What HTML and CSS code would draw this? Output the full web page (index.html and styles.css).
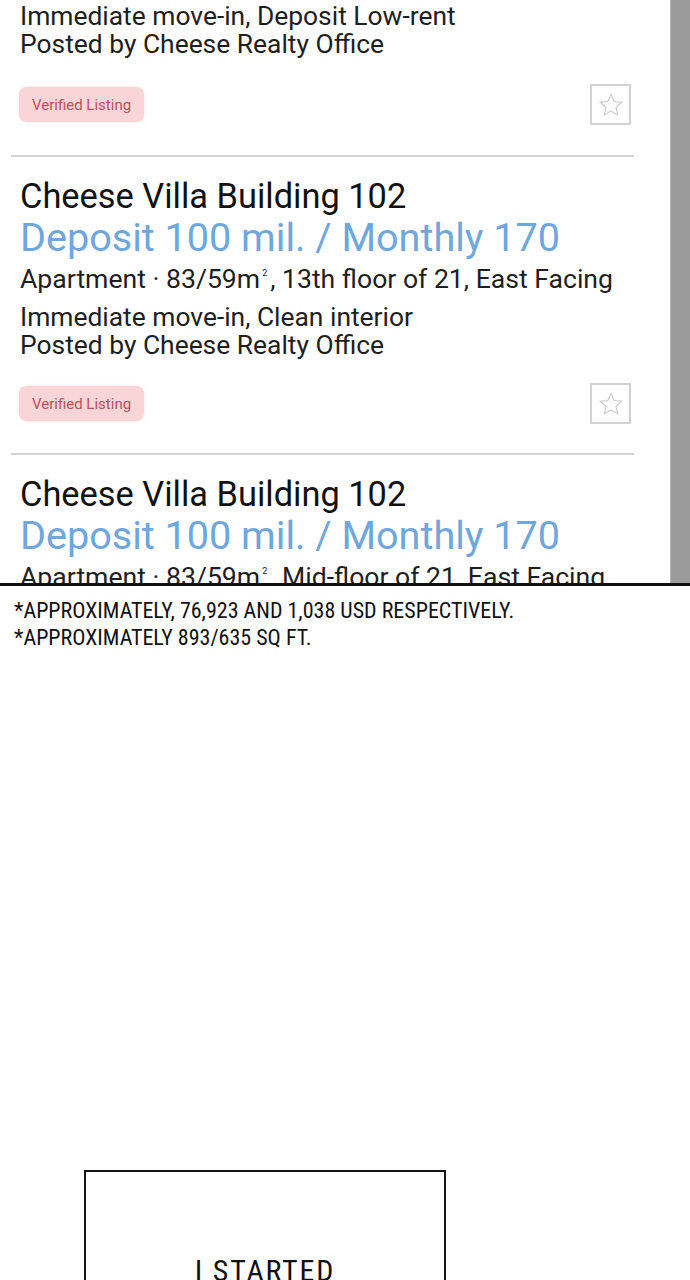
FILE: index.html
```html
<!DOCTYPE html>
<html lang="en">
<head>
<meta charset="utf-8">
<title>Listings</title>
<link rel="stylesheet" href="styles.css">
</head>
<body>
<section class="panel">
  <div class="list">
    <article class="item item-first">
      <div class="desc">
        <div>Immediate move-in, Deposit Low-rent</div>
        <div>Posted by Cheese Realty Office</div>
      </div>
      <div class="meta">
        <span class="badge">Verified Listing</span>
        <span class="fav"><svg viewBox="0 0 24 24" width="26" height="26"><path d="M12 2.2l2.9 6.6 7.1.6-5.4 4.7 1.6 7-6.2-3.7-6.2 3.7 1.6-7L2 9.4l7.1-.6z" fill="none" stroke="#c9c9c9" stroke-width="1" stroke-linejoin="miter"/></svg></span>
      </div>
    </article>
    <hr class="sep">
    <article class="item">
      <h2 class="title">Cheese Villa Building 102</h2>
      <div class="price">Deposit 100 mil. / Monthly 170</div>
      <div class="specs">Apartment · 83/59m<sup>2</sup>, 13th floor of 21, East Facing</div>
      <div class="desc">
        <div>Immediate move-in, Clean interior</div>
        <div>Posted by Cheese Realty Office</div>
      </div>
      <div class="meta">
        <span class="badge">Verified Listing</span>
        <span class="fav"><svg viewBox="0 0 24 24" width="26" height="26"><path d="M12 2.2l2.9 6.6 7.1.6-5.4 4.7 1.6 7-6.2-3.7-6.2 3.7 1.6-7L2 9.4l7.1-.6z" fill="none" stroke="#c9c9c9" stroke-width="1" stroke-linejoin="miter"/></svg></span>
      </div>
    </article>
    <hr class="sep">
    <article class="item">
      <h2 class="title">Cheese Villa Building 102</h2>
      <div class="price">Deposit 100 mil. / Monthly 170</div>
      <div class="specs">Apartment · 83/59m<sup>2</sup>, Mid-floor of 21, East Facing</div>
    </article>
  </div>
  <div class="scrollbar"></div>
</section>
<section class="notes">
  <p>*Approximately, 76,923 and 1,038 USD respectively.</p>
  <p>*Approximately 893/635 sq ft.</p>
</section>
<section class="caption-box">
  <p>I started</p>
</section>
</body>
</html>
```
FILE: styles.css
```css
html, body {
  margin: 0;
  padding: 0;
  background: #fff;
}
body {
  width: 690px;
  font-family: Roboto, "Noto Sans", sans-serif;
  color: #1a1a1a;
  overflow: hidden;
}
.panel {
  display: flex;
  height: 583px;
  overflow: hidden;
  border-bottom: 3px solid #111;
}
.list {
  flex: 1;
  min-width: 0;
}
.scrollbar {
  width: 19px;
  background: #9b9b9b;
  border-left: 1px solid #b5b5b5;
}
.item {
  padding-left: 20px;
  padding-right: 39px;
}
.item-first {
  padding-top: 2px;
}
.title {
  margin: 19px 0 0;
  font-size: 34.4px;
  line-height: 40px;
  font-weight: 400;
  color: #111;
  white-space: nowrap;
}
.price {
  font-size: 39.6px;
  line-height: 44px;
  color: #6fa7dc;
  white-space: nowrap;
}
.specs {
  margin-top: 2px;
  font-size: 26.6px;
  line-height: 34px;
  color: #1e1e1e;
  white-space: nowrap;
}
.specs sup {
  font-size: 9px;
  vertical-align: 12px;
  line-height: 0;
  margin: 0 3px 0 2px;
}
.desc {
  font-size: 26.4px;
  line-height: 28px;
  color: #1e1e1e;
  white-space: nowrap;
}
.item .specs + .desc {
  margin-top: 7px;
}
.meta {
  display: flex;
  justify-content: space-between;
  align-items: center;
  margin-top: 24px;
  height: 41px;
}
.item-first .meta {
  margin-top: 26px;
}
.badge {
  display: inline-flex;
  align-items: center;
  height: 35px;
  padding: 0 13px;
  margin-left: -1px;
  border-radius: 8px;
  background: #f9d5d7;
  color: #c04f5b;
  font-size: 15px;
  box-shadow: 0 0 3px rgba(240, 190, 195, 0.5);
}
.fav {
  box-sizing: border-box;
  width: 41px;
  height: 41px;
  border: 2px solid #d2d2d2;
  display: flex;
  align-items: center;
  justify-content: center;
}
.fav svg {
  display: block;
}
.sep {
  margin: 30px 36px 0 11px;
  border: 0;
  height: 2px;
  background: #d3d3d3;
}
.item:not(.item-first) + .sep {
  margin-top: 29px;
}
.notes {
  padding: 11px 0 0 14px;
  font-family: "Roboto Condensed", Roboto, sans-serif;
  font-size: 22px;
  line-height: 27px;
  text-transform: uppercase;
  color: #111;
}
.notes p {
  margin: 0;
  white-space: nowrap;
}
.caption-box {
  box-sizing: border-box;
  margin: 519px 0 0 84px;
  width: 362px;
  height: 200px;
  border: 2.5px solid #151515;
  padding-top: 82px;
  text-align: center;
}
.caption-box p {
  margin: 0;
  font-family: "Roboto Condensed", Roboto, sans-serif;
  font-size: 30px;
  line-height: 34px;
  letter-spacing: 1.8px;
  text-transform: uppercase;
  color: #111;
}
```
